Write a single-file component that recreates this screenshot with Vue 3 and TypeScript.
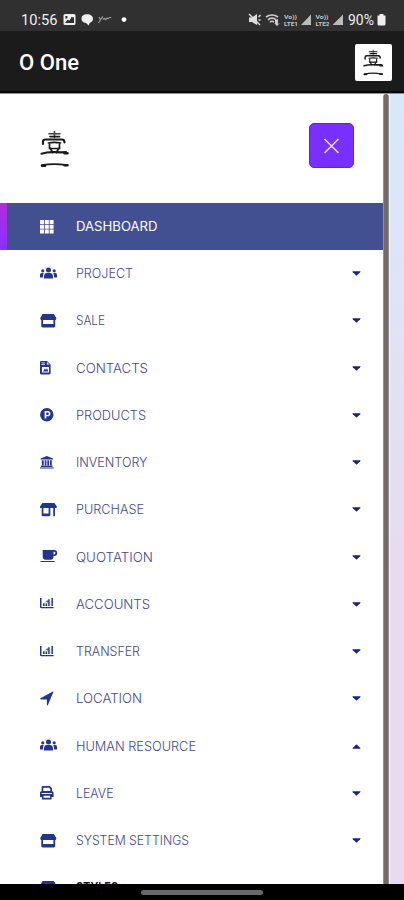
<script setup lang="ts">
type IconName = 'grid' | 'users' | 'store' | 'contact' | 'product' | 'bank' | 'shop' | 'cup' | 'chart' | 'arrow' | 'print'

interface MenuItem {
  label: string
  icon: IconName
  width: number
  open?: boolean
}

const items: MenuItem[] = [
  { label: 'PROJECT', icon: 'users', width: 57 },
  { label: 'SALE', icon: 'store', width: 29 },
  { label: 'CONTACTS', icon: 'contact', width: 72 },
  { label: 'PRODUCTS', icon: 'product', width: 70 },
  { label: 'INVENTORY', icon: 'bank', width: 71.5 },
  { label: 'PURCHASE', icon: 'shop', width: 68 },
  { label: 'QUOTATION', icon: 'cup', width: 77 },
  { label: 'ACCOUNTS', icon: 'chart', width: 74 },
  { label: 'TRANSFER', icon: 'chart', width: 64 },
  { label: 'LOCATION', icon: 'arrow', width: 66 },
  { label: 'HUMAN RESOURCE', icon: 'users', width: 120, open: true },
  { label: 'LEAVE', icon: 'print', width: 37.5 },
  { label: 'SYSTEM SETTINGS', icon: 'store', width: 113 },
]

const icons: Record<IconName, string> = {
  grid: 'M0 2h4v4H0zM4.8 2h4v4h-4zM9.6 2h4v4h-4zM0 6.7h4v4H0zM4.8 6.7h4v4h-4zM9.6 6.7h4v4h-4zM0 11.4h4v4H0zM4.8 11.4h4v4h-4zM9.6 11.4h4v4h-4z',
  users: 'M8.5 2.4a2.5 2.5 0 1 1 0 5a2.5 2.5 0 0 1 0-5zM2.8 4.2a1.6 1.6 0 1 1 0 3.2a1.6 1.6 0 0 1 0-3.2zM14.2 4.2a1.6 1.6 0 1 1 0 3.2a1.6 1.6 0 0 1 0-3.2zM4 13.6v-2.2C4 9.2 5.4 8 7 8h3c1.6 0 3 1.200 3 3.400v2.200zM0 12.400V10c0-1.200.8-1.900 1.800-1.900h2.100C3.200 9 3 10 2.900 12.400zM17 12.400V10c0-1.200-.8-1.900-1.800-1.900h-2.100c.7.900.9 1.900 1 4.300z',
  store: 'M2.6 2h11.300l2.300 3.800c.4 1.200-.4 2.300-1.500 2.300H1.800C.6 8.100-.1 7 .4 5.800zM1.300 8h1.800v4h10.300V8h1.800v6.200c0 .7-.5 1.200-1.200 1.200H2.500c-.7 0-1.200-.5-1.200-1.200z',
  contact: 'M0 3.200C0 2.500.5 2 1.200 2H7l3.600 3.600v8.600c0 .7-.5 1.200-1.200 1.200H1.200C.5 15.400 0 14.900 0 14.200zM1.400 3.400v.8h3.700v-.8zM1.400 5.300v.7h3.700v-.7zM7 3v2.600h2.600zM2 8v5.500h7V8zM3 12.600l1.800-3 1.200 1.300 1-1.800 1.200 3.500z',
  product: 'M6.800 2a6.700 6.700 0 1 1 0 13.400A6.700 6.700 0 0 1 6.800 2zM4.600 5v7.500h1.700v-2.200h1.500C9.500 10.300 10.500 9.200 10.500 7.700S9.500 5 7.800 5zM6.300 6.500h1.300c.8 0 1.200.5 1.200 1.200s-.4 1.200-1.200 1.200H6.300z',
  bank: 'M6.800 2l6.200 2.500v1H.6v-1zM1.800 6.300h1.900v5.800H1.800zM4.700 6.300h1.700v5.800H4.700zM7.300 6.300H9v5.800H7.300zM9.900 6.300h1.900v5.800H9.900zM1.100 11.700h11.400v1.200H1.100zM0 13.400h13.600v1.200H0z',
  shop: 'M2.400 2h12l2.400 3.500c.3.900-.3 1.600-1.100 1.600H1C.2 7.100-.3 6.400 0 5.500zM1.700 7h1.700v5.600h5.200V7h1.700v7.100c0 .7-.5 1.200-1.100 1.200H2.800c-.6 0-1.100-.5-1.100-1.200zM13.300 7H15v8.300h-1.700z',
  cup: 'M2.700 2h11.500a3 3 0 0 1 0 6h-.7v1c0 1.700-1.200 2.800-2.800 2.800H5.500C3.900 11.800 2.700 10.700 2.700 9zM13.500 3.700v2.700h.6a1.350 1.350 0 0 0 0-2.700zM.3 12.900h14.500c0 .8-.6 1.200-1.300 1.200H1.600c-.7 0-1.300-.4-1.300-1.200z',
  chart: 'M0 3h1.500v8.900h12.100v1.400H1.200C.4 13.300 0 12.900 0 12.100zM3 8.200h1.600v2.700H3zM5.500 6.400h1.700v4.500H5.500zM8.200 4.300h1.500v6.600H8.200zM11.400 3h1.500v7.900h-1.500zM5 6.700l2.300-1.500 1 1.500L6 9z',
  arrow: 'M13.600 1.600L7.900 15.100c-.2.500-1 .4-1-.2V9.400H.9C.3 9.400 0 8.600.5 8.300L12.900 1.600c.4-.2.9 0 .7.500z',
  print: 'M1.600 7V3.500C1.600 2.700 2.200 2 3 2h6.800L12 4.200V7h-1.700V4.900L9 3.700H3.300V7zM2.100 7h9.400c1.200 0 2.100.9 2.100 2.100v3.800h-2v2.500H2v-2.500H0V9.100C0 7.900.9 7 2.100 7zM3.500 11.700v2.100h6.600v-2.100zM1.700 8.900v1h10.200v-1z',
}
</script>

<template>
  <div class="screen">
    <div class="status">
      <div class="status-side">
        <svg class="clock" width="38" height="16"><text x="0" y="13" textLength="36.500" lengthAdjust="spacingAndGlyphs">10:56</text></svg>
        <svg class="notes" width="68" height="16" viewBox="0 0 68 16">
          <path fill="#eee" fill-rule="evenodd" d="M3 2h9q1.500 0 1.500 1.500v8q0 1.500-1.500 1.500H3q-1.500 0-1.500-1.500v-8Q1.500 2 3 2zM3.400 4v2.500h2V4zM9.500 5L7.500 8.500 5.500 7.800 3 11h9V5.500z" />
          <path fill="#eee" d="M25 2.200c3.600 0 6 1.800 6 4.500 0 2.100-1.600 3.600-3.300 4.200L26.600 13.500 24 11c-3.200-.2-4.500-2-4.500-4.400 0-2.600 2.100-4.400 5.500-4.400z" />
          <path fill="none" stroke="#999" stroke-width="1.200" d="M37 5l1.500 2.500L41 4.500M39 7l-2.500 4M41 7.500q2.500-2.500 2 0q1 .5 2-1.300q1 1.200 2.300-.7h2" />
          <circle cx="62" cy="7.600" r="2.400" fill="#fff" />
        </svg>
      </div>
      <div class="status-side">
        <svg width="100" height="16" viewBox="0 0 100 16">
          <path fill="#ddd" d="M1 5.500h3L9 2v11L4 10H1z" />
          <path fill="none" stroke="#ddd" stroke-width="1.500" d="M1 2l11 11M10.500 5l2-2M10.500 8h2" />
          <path fill="none" stroke="#ccc" stroke-width="1.700" d="M18 5q6-4 12 0M20 7.700q4-3 8 0M22 10q2-1.500 4 0" />
          <path fill="#ccc" d="M27 8l3-1v5l2-1-3 3-3-3 1 .4z" />
          <g fill="#c4c4c4" class="tiny">
            <text x="36" y="6.500" textLength="13" lengthAdjust="spacingAndGlyphs">Vo))</text>
            <text x="36" y="13.500" textLength="14" lengthAdjust="spacingAndGlyphs">LTE1</text>
            <text x="67.500" y="6.500" textLength="13" lengthAdjust="spacingAndGlyphs">Vo))</text>
            <text x="67.500" y="13.500" textLength="14" lengthAdjust="spacingAndGlyphs">LTE2</text>
          </g>
          <path fill="#bbb" d="M53 13L63 2.500V13zM84.500 13L95 2.500V13z" />
        </svg>
        <svg class="clock" width="29" height="16"><text x="0" y="13" textLength="26" lengthAdjust="spacingAndGlyphs">90%</text></svg>
        <svg width="9" height="16" viewBox="0 0 9 16"><path fill="#eee" d="M2.500 2h4v1.500h2v8.500q0 1.500-1.500 1.500H2Q.5 13.500.5 12V3.500h2z" /></svg>
      </div>
    </div>

    <header class="appbar">
      <svg class="title" width="64" height="28"><text x="0" y="21" textLength="60" lengthAdjust="spacingAndGlyphs">O One</text></svg>
      <div class="avatar">
        <svg width="21" height="27" viewBox="0 0 30 38" preserveAspectRatio="none"><use href="#brand" /></svg>
      </div>
    </header>

    <main class="body">
      <aside class="drawer">
        <div class="drawer-head">
          <svg class="logo" width="30" height="38" viewBox="0 0 30 38">
            <g id="brand" fill="none" stroke="#191919" stroke-linecap="round">
              <path stroke-width="1.600" stroke="#444" d="M9 3.700h11M14.500 1.500v6" />
              <path stroke-width="1.700" d="M10 6.600h9.500" />
              <path stroke-width="2.100" d="M3 14V11.500q0-2 2.500-2H22q2.500 0 2.500 3" />
              <path stroke-width="1.700" d="M8.500 13q6-1.300 12 0M9.500 14.500v4h10v-4M10.500 18.500l2 4M18.500 18.500l-2 4" />
              <path stroke-width="2.200" d="M1.500 23.700q6-1.800 13-1.500t11.500 0" />
              <path stroke-width="2.600" d="M24.500 23.200h3M2 35.700h3M24.500 35.300h3" />
              <path stroke-width="1.800" d="M2 35.200q12-2.200 25 0" />
            </g>
          </svg>
          <button class="close" aria-label="Close">
            <svg width="18" height="18" viewBox="0 0 18 18"><path d="M1.500 2l14 14M15.500 2L1.500 16" stroke="#f2dcff" stroke-width="1.500" /></svg>
          </button>
        </div>

        <nav class="menu">
          <div class="row active">
            <svg class="icon" width="18" height="18" viewBox="0 0 18 18"><path :d="icons.grid" /></svg>
            <svg class="label" width="90" height="20"><text x="0" y="14.500" textLength="81.500" lengthAdjust="spacingAndGlyphs">DASHBOARD</text></svg>
          </div>
          <div v-for="item in items" :key="item.label" class="row">
            <svg class="icon" width="18" height="18" viewBox="0 0 18 18"><path :d="icons[item.icon]" fill-rule="evenodd" /></svg>
            <svg class="label" width="140" height="20"><text x="0" y="14.500" :textLength="item.width" lengthAdjust="spacingAndGlyphs">{{ item.label }}</text></svg>
            <svg class="caret" :class="{ open: item.open }" width="9" height="5" viewBox="0 0 9 5"><path d="M.7.300h7.600Q8.700.800 8.200 1.300L5 4.300q-.5.400-1 0L.8 1.300Q.3.800.7.300z" /></svg>
          </div>
          <div class="row last">
            <svg class="icon" width="18" height="18" viewBox="0 0 18 18"><path :d="icons.store" /></svg>
            <svg class="label" width="90" height="20"><text x="0" y="14.500" textLength="42" lengthAdjust="spacingAndGlyphs">STYLES</text></svg>
          </div>
        </nav>
      </aside>
      <div class="edge"></div>
      <div class="page"></div>
    </main>

    <footer class="gesture"><div class="pill"></div></footer>
  </div>
</template>

<style>
body {
  margin: 0;
}
</style>

<style scoped>
.screen {
  width: 404px;
  height: 900px;
  display: flex;
  flex-direction: column;
  overflow: hidden;
  background: #fff;
  font-family: Inter, "Liberation Sans", sans-serif;
}
svg {
  display: block;
  flex: none;
}
.status {
  box-sizing: border-box;
  height: 31px;
  flex: none;
  padding: 9px 18px 0 21px;
  background: #303030;
  display: flex;
  justify-content: space-between;
  align-items: center;
}
.status-side {
  display: flex;
  align-items: center;
}
.notes {
  margin-left: 3px;
}
.clock {
  font: 400 14.5px Roboto, sans-serif;
  fill: #eee;
}
.tiny {
  font: 700 5.500px Roboto, sans-serif;
}
.appbar {
  box-sizing: border-box;
  height: 62px;
  flex: none;
  padding: 0 12px 0 19px;
  background: #1b1b1b;
  border-bottom: 2px solid #050505;
  display: flex;
  justify-content: space-between;
  align-items: center;
}
.title {
  font: 500 22px Roboto, sans-serif;
  fill: #fff;
  margin-top: 4px;
}
.avatar {
  width: 37px;
  height: 37px;
  margin-top: 2px;
  background: #fff;
  border-radius: 2px;
  display: flex;
  align-items: center;
  justify-content: center;
}
.body {
  box-sizing: border-box;
  flex: 1;
  min-height: 0;
  border-top: 1px solid #8d8d8d;
  display: flex;
}
.drawer {
  width: 383px;
  flex: none;
  background: #fff;
  overflow: hidden;
}
.drawer-head {
  box-sizing: border-box;
  height: 109px;
  padding: 29px 29px 0 40px;
  display: flex;
  justify-content: space-between;
  align-items: flex-start;
}
.logo {
  margin-top: 7px;
}
.close {
  box-sizing: border-box;
  width: 45px;
  height: 45px;
  padding: 0;
  border: 1px solid #681be9;
  border-radius: 5px;
  background: #792fff;
  display: flex;
  align-items: center;
  justify-content: center;
}
.row {
  box-sizing: border-box;
  height: 47.250px;
  padding: 0 22.500px 0 39.500px;
  display: flex;
  align-items: center;
}
.icon {
  fill: #24358d;
  margin-right: 18px;
}
.row .icon {
  margin-top: 1px;
}
.label {
  font-size: 12.800px;
  font-weight: 300;
  fill: #454988;
}
.caret {
  margin-left: auto;
  margin-top: 1px;
  fill: #172481;
}
.caret.open {
  transform: rotate(180deg);
}
.active {
  height: 46.500px;
  padding-left: 32.500px;
  background: #425092;
  border-left: 7px solid #a02bec;
  border-image: linear-gradient(#b62bdc, #8532ff) 1;
}
.active .icon,
.active .label {
  fill: #fff;
}
.active .label {
  font-weight: 400;
}
.last .label {
  font-weight: 600;
  fill: #111;
}
.edge {
  width: 6px;
  flex: none;
  background: linear-gradient(90deg, #aaa1a1, #746a68 25%, #746a68 75%, #a19a9c);
  border-radius: 3px 3px 0 0;
}
.page {
  flex: 1;
  border-left: 1px solid #f5f3fb;
  background: linear-gradient(#d8e8fb, #e0e3f7 28%, #e7daf2 60%, #e8daf3);
}
.gesture {
  height: 16px;
  flex: none;
  background: #000;
  display: flex;
  align-items: center;
  justify-content: center;
}
.pill {
  width: 122px;
  height: 5px;
  border-radius: 3px;
  background: #69686a;
}
</style>
